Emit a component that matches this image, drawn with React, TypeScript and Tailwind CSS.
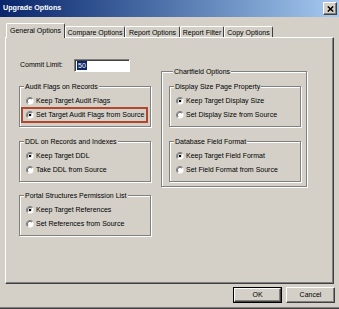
import React from "react";

function Radio({ checked }: { checked?: boolean }) {
  return (
    <svg width="8" height="8" viewBox="0 0 8 8" className="shrink-0">
      <circle cx="4" cy="4" r="3.5" fill="#fff" />
      <path d="M1.4 6.6 A3.5 3.5 0 0 1 6.6 1.4" fill="none" stroke="#808080" strokeWidth="1" />
      <path d="M2.1 5.9 A2.6 2.6 0 0 1 5.9 2.1" fill="none" stroke="#404040" strokeWidth="0.8" />
      {checked && <circle cx="4" cy="4" r="1.3" fill="#000" />}
    </svg>
  );
}

function Option({ label, checked, highlight }: { label: string; checked?: boolean; highlight?: boolean }) {
  return (
    <div className="relative flex h-[14px] items-center gap-[2px] pl-[6px]">
      <Radio checked={checked} />
      <span className="whitespace-nowrap">{label}</span>
      {highlight && (
        <span className="pointer-events-none absolute left-[1px] right-[2px] top-[-1px] h-[16px] border-2 border-[#b4472b]" />
      )}
    </div>
  );
}

function Group({ title, children, className = "" }: { title: string; children: React.ReactNode; className?: string }) {
  return (
    <fieldset
      className={`m-0 border border-[#808080] px-0 pt-[3px] pb-[4px] shadow-[inset_1px_1px_0_#fff,1px_1px_0_#fff] ${className}`}
    >
      <legend className="ml-[4px] bg-[#d4d0c8] px-[1px] leading-[9px] whitespace-nowrap">{title}</legend>
      {children}
    </fieldset>
  );
}

function Tab({ label, w }: { label: string; w: string }) {
  return (
    <div
      className={`mb-[1px] flex h-[11px] ${w} items-center justify-center rounded-t-[2px] border-t border-l border-r border-t-white border-l-white border-r-[#404040] leading-[9px] whitespace-nowrap`}
    >
      {label}
    </div>
  );
}

export default function App() {
  return (
    <div className="flex h-[309px] w-[339px] flex-col overflow-hidden bg-[#d4d0c8] font-['Liberation_Sans',Arial,sans-serif] text-[7px] text-black shadow-[inset_0_-1px_0_#404040,inset_0_-2px_0_#808080]">
      {/* Title bar */}
      <div className="flex h-[17px] items-center justify-between bg-linear-to-r from-[#0a246a] to-[#a6caf0] pl-[3px] pr-[2px]">
        <span className="text-[7.2px] font-bold text-white">Upgrade Options</span>
        <div className="flex h-[13px] w-[14px] items-center justify-center border-t border-l border-b border-r border-t-white border-l-white border-b-[#404040] border-r-[#404040] bg-[#d4d0c8] shadow-[inset_-1px_-1px_0_#808080]">
          <svg width="7" height="6" viewBox="0 0 7 6">
            <path d="M0.8 0.5 L6.2 5.5 M6.2 0.5 L0.8 5.5" stroke="#000" strokeWidth="1.5" />
          </svg>
        </div>
      </div>

      {/* Tabs */}
      <div className="relative z-10 -mb-[1px] flex h-[21px] items-end pl-[6px]">
        <div className="flex h-[15px] w-[59px] items-start justify-center rounded-t-[2px] border-t border-l border-r border-t-white border-l-white border-r-[#404040] bg-[#d4d0c8] pt-[2px] leading-[9px] whitespace-nowrap">
          General Options
        </div>
        <Tab label="Compare Options" w="w-[60px]" />
        <Tab label="Report Options" w="w-[55px]" />
        <Tab label="Report Filter" w="w-[44px]" />
        <Tab label="Copy Options" w="w-[49px]" />
      </div>

      {/* Panel */}
      <div className="mx-[5px] flex h-[247px] border-t border-l border-r border-b border-t-white border-l-white border-r-[#404040] border-b-[#404040] pl-[13px] shadow-[inset_-1px_-1px_0_#808080]">
        {/* Left column */}
        <div className="flex w-[132px] flex-col">
          <div className="mt-[21px] flex h-[13px] items-center">
            <span className="ml-[1px] w-[54px]">Commit Limit:</span>
            <div className="flex h-[13px] w-[56px] items-center border-t border-l border-b border-r border-t-[#808080] border-l-[#808080] border-b-white border-r-white bg-white pl-[1px] shadow-[inset_1px_1px_0_#404040]">
              <span className="ml-[1px] bg-[#0a246a] px-[1px] leading-[9px] text-white">50</span>
            </div>
          </div>
          <Group title="Audit Flags on Records" className="mt-[10px]">
            <Option label="Keep Target Audit Flags" />
            <Option label="Set Target Audit Flags from Source" checked highlight />
          </Group>
          <Group title="DDL on Records and Indexes" className="mt-[10px]">
            <Option label="Keep Target DDL" checked />
            <Option label="Take DDL from Source" />
          </Group>
          <Group title="Portal Structures Permission List" className="mt-[9px]">
            <Option label="Keep Target References" checked />
            <Option label="Set References from Source" />
          </Group>
        </div>

        {/* Right column */}
        <div className="ml-[10px] flex w-[146px] flex-col">
          <Group title="Chartfield Options" className="mt-[29px] pt-[6px] pl-[7px] pr-[5px]">
            <Group title="Display Size Page Property">
              <Option label="Keep Target Display Size" checked />
              <Option label="Set Display Size from Source" />
            </Group>
            <Group title="Database Field Format" className="mt-[10px]">
              <Option label="Keep Target Field Format" checked />
              <Option label="Set Field Format from Source" />
            </Group>
          </Group>
        </div>
      </div>

      {/* Buttons */}
      <div className="flex justify-end gap-[4px] pt-[3px] pr-[4px]">
        <div className="flex h-[16px] w-[49px] items-center justify-center border border-black">
          <div className="flex h-full w-full items-center justify-center border-t border-l border-b border-r border-t-white border-l-white border-b-[#404040] border-r-[#404040] shadow-[inset_-1px_-1px_0_#808080]">
            OK
          </div>
        </div>
        <div className="flex h-[16px] w-[49px] items-center justify-center border-t border-l border-b border-r border-t-white border-l-white border-b-[#404040] border-r-[#404040] shadow-[inset_-1px_-1px_0_#808080]">
          Cancel
        </div>
      </div>
    </div>
  );
}
